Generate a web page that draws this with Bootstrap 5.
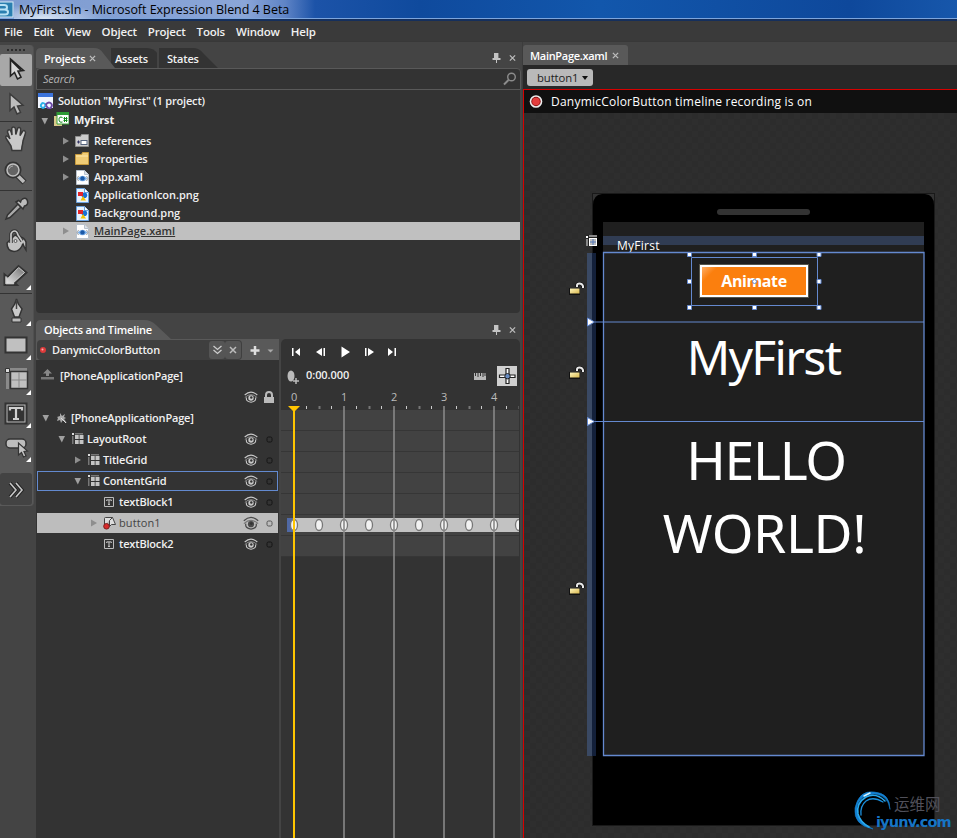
<!DOCTYPE html>
<html lang="en">
<head>
<meta charset="utf-8">
<title>MyFirst.sln - Microsoft Expression Blend 4 Beta</title>
<link href="https://cdn.jsdelivr.net/npm/bootstrap@5.3.0/dist/css/bootstrap.min.css" rel="stylesheet">
<style>
body{width:957px;height:838px;overflow:hidden;background:#444;color:#f0f0f0;font:600 11px/18px "Open Sans","Noto Sans",sans-serif;letter-spacing:-.18px}
svg{display:block;flex:none}
.app-title{height:21px;background:linear-gradient(90deg,#7d9bd0 0,#8ba6d8 245px,#5f84c6 285px,#1c53a8 315px,#0f4a9d 420px,#1257ac 600px,#0e489b 850px,#1757ab);border-bottom:2px solid #152f5c;box-shadow:inset 0 -1px #7da5dc;color:#000;font-weight:400;font-size:12.5px;letter-spacing:-.04px;white-space:nowrap}
.app-title .caption{background:radial-gradient(ellipse 60px 14px at 30px 18px,#d8e4f3,transparent);line-height:20px;padding-left:5px;width:300px}
.menu-strip{height:21px;background:#3a3a3a;padding-left:4px;gap:11px;line-height:22px;font-size:11.5px;letter-spacing:-.19px;border-bottom:1px solid #383838}
.tool-strip{width:34px;height:461px;margin-top:3px;background:#595959;border-radius:0 4px 4px 0;border-right:1px solid #505050}
.tool-strip .sep{height:1px;width:32px;background:#333}
.grip{height:9px;padding:4px 0 0 7px}
.tool{width:32px;height:34px}
.tool.sel{height:32px;background:#a8a8a8;border-radius:2px;margin-bottom:1px}
.tool.more{height:32px;background:#434343;border-radius:3px;margin-top:9px}
.dock{width:486px;margin-left:2px;padding-top:5px}
.tabs{height:21px;padding-right:6px}
.ptab{height:20px;background:#333;padding-top:1px;line-height:20px;flex:none}
.ptab.on{background:#595959;color:#fff}
.p1{width:79px;margin-right:-4px;padding-left:8px;position:relative;z-index:1;clip-path:path("M0 20V5Q0 0 5 0H58Q64 0 67 5L79 20Z")}
.p2{width:46px;padding-left:4px;clip-path:path("M0 0H36Q43 0 47 6V20H0Z")}
.p3{width:60px;margin-left:2px;padding-left:8px;clip-path:path("M0 0H34Q40 0 44 5L59 20H0Z")}
.p4{width:137px;padding-left:8px;padding-top:0;clip-path:path("M0 20V5Q0 0 5 0H108Q115 0 120 5L136 20Z")}
.searchbox{height:22px;width:485px;border:1px solid #595959;border-radius:4px 4px 0 0;background:#333;color:#b5b5b5;font-weight:400;font-style:italic;line-height:18px;padding:0 3px 1px 6px;letter-spacing:-.2px}
.tree{width:484px;height:223px;background:#333;border-radius:0 0 4px 4px;padding-top:1px}
.tree .rowx{height:18px;padding-left:24px}
.tree .rowx.png{letter-spacing:-.04px}
.tree .rowx.hi{background:#c0c0c0;color:#333;text-decoration:underline;letter-spacing:0}
.tri{width:12px;height:12px}
.lower{margin-top:7px;height:518px}
.objects{width:243px;background:#333}
.tl-name{height:21px;background:#595959}
.tl-name .inner{width:205px;height:20px;margin:1px 0 0 1px;background:#3f3f3f;border-radius:4px;padding-left:2px}
.minib{width:16px;height:18px;background:#555;border-radius:3px}
.orow{height:20px;margin:0 1px 1px 1px}
.orow.cur{border:1px solid #638ad0}
.orow.hi{background:#bdbdbd;color:#444;font-weight:400;letter-spacing:.1px}
.orow .eye{margin-left:auto}
.timeline{width:239px;margin-left:2px;background:#333;border-radius:5px 5px 0 0}
.workspace{width:435px;border-left:1px solid #3c3c3c}
.doctab{margin-top:3px;width:105px;height:20px;background:#595959;border-radius:3px 3px 0 0;padding-left:7px;color:#fff;line-height:21px;letter-spacing:-.3px}
.crumbs{height:24px;background:#282828;padding:4px 0 0 4px}
.crumb{width:66px;height:17px;background:#b9b9b9;color:#222;border-radius:3px;padding-left:10px;font-weight:400;font-size:11.3px;line-height:17px;letter-spacing:-.1px}
.design{border-top:1px solid #d80000;border-left:1px solid #d80000;height:749px}
.recbar{height:23px;background:#101010;color:#fff;font-weight:400;font-size:12px;padding-left:5px;letter-spacing:.22px}
.board{height:725px;background:repeating-conic-gradient(#2e2e2e 0 25%,#2c2c2c 0 50%) 0 0/12px 12px;padding:80px 0 0 68px}
.phone{width:343px;height:633px;background:#000;border:1px solid #191919;padding:28px 10px 0 10px}
.screen{width:321px;height:534px;background:#1f1f1f;color:#fff;font-weight:400;text-align:center}
.screen .app-name{margin-top:14px;height:16px;background:linear-gradient(#303c53 9px,transparent 9px);text-align:left;padding-left:14px;font-size:12px;line-height:19px;letter-spacing:.25px}
.orange{width:108px;height:32px;margin:13px 0 0 97px;background:linear-gradient(135deg,#ffae66 0,#fb7f0e 12%);border:2px solid #fff;outline:1px solid #54544c;color:#fff;font:700 16px/28px "Open Sans",sans-serif;letter-spacing:-.4px}
.big{font-family:"Noto Sans","Open Sans",sans-serif;line-height:73px}
.big-name{font-size:48px;letter-spacing:-1.7px;margin-top:23px}
.big-hello{font-size:53.5px;letter-spacing:-.4px;margin-top:30px;padding-left:2px}
.big-hello span{letter-spacing:-1.3px;padding-left:3px}
.adorn{left:0;top:0;pointer-events:none}
.wm{left:330px;top:677px;width:103px;height:48px}
.wm-cn{font:400 15.5px/20px "Noto Sans CJK SC",sans-serif;color:#50505a;letter-spacing:0}
.wm-en{font:700 14.5px/16px "DejaVu Sans","Open Sans",sans-serif;color:#1674c4;letter-spacing:-.85px}
</style>
<script src="https://cdn.jsdelivr.net/npm/bootstrap@5.3.0/dist/js/bootstrap.bundle.min.js"></script>
</head>
<body>
<svg width="0" height="0" class="position-absolute" aria-hidden="true"><defs>
<linearGradient id="gt" x1="0" y1="1" x2="1" y2="0"><stop offset="0" stop-color="#eee"/><stop offset="1" stop-color="#666"/></linearGradient>
<linearGradient id="gy" x1="0" y1="0" x2="1" y2="1"><stop offset="0" stop-color="#fff6bd"/><stop offset="1" stop-color="#d9b84e"/></linearGradient>
<symbol id="x" viewBox="0 0 8 8"><path d="M1 1l6 6M7 1l-6 6" stroke="#bcbcbc" stroke-width="1.5"/></symbol>
<symbol id="pin" viewBox="0 0 9 10"><path d="M2 0h5v5h1.500v2H5v3H4V7H.5V5H2z" fill="#c4c4c4"/><path d="M6 0h1v5H6z" fill="#777"/></symbol>
<symbol id="rt" viewBox="0 0 12 12"><path d="M3 2.500l6 3.500-6 3.500z" fill="#8e8e8e"/></symbol>
<symbol id="dn" viewBox="0 0 12 12"><path d="M2.500 3h6.500L5.800 9.500z" fill="#a0a0a0"/></symbol>
<symbol id="corner" viewBox="0 0 5 5"><path d="M5 0v5H0z" fill="#fff"/></symbol>
<symbol id="xaml" viewBox="0 0 13 15"><path d="M.5.5h8l4 4v10H.5z" fill="#fff" stroke="#b9c2cd"/><path d="M8.500.5v4h4" fill="#dce2ea" stroke="#b9c2cd"/><path d="M1.500 8.500Q6.500 3 11.500 8.500Q6.500 14 1.500 8.500" fill="#7fb2ea"/><circle cx="6.500" cy="8.400" r="2.200" fill="#1c5aa8"/><path d="M2.500 6L1.200 8.500 2.500 11M10.500 6l1.300 2.500L10.500 11" stroke="#777" stroke-width=".7" fill="none"/></symbol>
<symbol id="png" viewBox="0 0 13 15"><path d="M.5.5h8l4 4v10H.5z" fill="#e9f4ff" stroke="#6ba2df"/><path d="M8.500.5v4h4" fill="#fff" stroke="#6ba2df"/><circle cx="8.400" cy="7.300" r="2.800" fill="#1872d4"/><path d="M2 4h5v4H2z" fill="#e3262a"/><path d="M7 8l3 4.500H4.500z" fill="#f5c400"/></symbol>
<symbol id="eye" viewBox="0 0 14 12"><path d="M.7 4Q7-1.800 13.300 4" fill="none" stroke="currentColor" stroke-width="1.100"/><path d="M2.500 6.500Q1.500 10.500 7 11.300Q12.500 10.500 11.500 6.500" fill="none" stroke="currentColor" stroke-width="1.100"/><path d="M.8 6.500Q7 .8 13.200 6.500" fill="none" stroke="currentColor" stroke-width="1" opacity=".6"/><circle cx="7" cy="7" r="2.700" fill="currentColor"/><circle cx="7.300" cy="6.500" r="1.200" fill="#333"/></symbol>
<symbol id="dot" viewBox="0 0 7 7"><rect x="1" y="1" width="5" height="5" rx="1.500" fill="none" stroke="currentColor" stroke-width="1"/></symbol>
<symbol id="grid" viewBox="0 0 12 12"><path d="M0 0h2v2H0z" fill="#ddd"/><path d="M3 0h8v1.500H3zM0 3h1.500v8H0z" fill="#777"/><path d="M3 2h3.700v4H3zM7.500 2H11.500v4H7.500zM3 7h3.700v4H3zM7.500 7H11.500v4H7.500z" fill="#c4c4c4"/></symbol>
<symbol id="tb" viewBox="0 0 11 11"><path d="M.5.5h9v9h-9z" fill="#333" stroke="#bbb"/><path d="M2.700 4V2.900h4.600V4M5 3v4.500M4 7.400h2" stroke="#ccc" fill="none"/></symbol>
<symbol id="lock" viewBox="0 0 16 13"><path d="M8 5V3.500Q8 1.500 10.500 1.500T14 4v2" fill="none" stroke="#111" stroke-width="3.500"/><path d="M8 5V3.500Q8 1.500 10.500 1.500T14 4v2" fill="none" stroke="#e8e8e8" stroke-width="2"/><path d="M0 6h11v7H0z" fill="#111"/><path d="M1 6.500h9.500v5H1z" fill="url(#gy)"/></symbol>
</defs></svg>

<header class="app-title d-flex">
 <svg width="14" height="19"><rect x="-4" y="2" width="17" height="15" fill="#2a7fb0" stroke="#d7edf8"/><path d="M-1 5H4q3 0 3 2.200T4.500 9.500Q8 9.500 8 12T5 14.500H-1M-1 9.500h5.500" stroke="#b8e2f5" stroke-width="2" fill="none"/></svg>
 <div class="caption">MyFirst.sln - Microsoft Expression Blend 4 Beta</div>
</header>
<nav class="menu-strip d-flex"><span>File</span><span>Edit</span><span>View</span><span>Object</span><span>Project</span><span>Tools</span><span>Window</span><span>Help</span></nav>

<div class="d-flex">
<aside class="tool-strip d-flex flex-column">
 <div class="grip"><svg width="18" height="2"><path d="M0 1h18" stroke="#2c2c2c" stroke-width="2" stroke-dasharray="2 2"/></svg></div>
 <div class="tool sel"><svg width="32" height="32"><path d="M10.500 5v17l4-3.500 3 6.500 3.500-1.800-3-6 5.500-.7z" fill="#d6d6d6" stroke="#222" stroke-width="1.600"/><path d="M11 6l10 10" stroke="#222" stroke-width="2"/></svg></div>
 <div class="tool"><svg width="32" height="34"><path d="M10 7v16.500l4-3.500 3 7 3.500-1.700-3-6.300 5.500-.7z" fill="#bdbdbd" stroke="#3b3b3b" stroke-width="1.500"/></svg></div>
 <div class="sep"></div>
 <div class="tool"><svg width="32" height="34"><path d="M11 24L6.500 17q-1.500-2.500 0-3T10 17L7.500 10q0-2.300 1.700-2.300T12 13l-.3-6.500Q12 5 13.500 5T15.500 7l.3 5.500L17.500 7q.6-2 2-1.500t1.200 2.500L20 13.500l2.500-4q1-1.500 2.300-.5t.4 3L23 19q-.3 3-1 5.500l-.5 4h-9.500z" fill="#c8c8c8" stroke="#383838" stroke-width="1.500"/></svg></div>
 <div class="tool"><svg width="32" height="34"><path d="M17 19l7.500 7.500" stroke="#333" stroke-width="6"/><path d="M17.500 19.500l6.500 6.500" stroke="#bcbcbc" stroke-width="3.500"/><circle cx="13" cy="14" r="7" fill="#666" stroke="#333" stroke-width="3"/><circle cx="13" cy="14" r="6" fill="#646464" stroke="#c0c0c0" stroke-width="1.500"/><path d="M9 13q1-3 4-3" stroke="#aaa" fill="none"/></svg></div>
 <div class="sep"></div>
 <div class="tool"><svg width="32" height="34"><path d="M6 28l1.500-4 10.500-11 3 3-11 10.500z" fill="#aaa" stroke="#333" stroke-width="1.500"/><path d="M16 11l7 7 1.500-3q4-1 3-5t-5-2q-1.500 1-2 3l-2-1.500z" fill="#bcbcbc" stroke="#333" stroke-width="1.500"/></svg></div>
 <div class="tool"><svg width="32" height="34"><path d="M15 10L7 18q0 8 7 8.500 5 0 8-5.500 0-1 1-2 1 3 3 6V17q-2-5-7-5z" fill="#c2c2c2" stroke="#333" stroke-width="1.500"/><path d="M11 18v-9q1-3 3.500-3T18 10l4 6" fill="none" stroke="#333" stroke-width="3.500"/><path d="M11 18v-9q1-3 3.500-3T18 10l4 6" fill="none" stroke="#c6c6c6" stroke-width="1.700"/><circle cx="15.500" cy="16" r="1.500" fill="#ddd" stroke="#555"/></svg></div>
 <div class="tool"><svg width="32" height="34"><path d="M4.500 26V15.500l3 2.500L18.500 7l8 6.500L15 24l2 2z" fill="url(#gt)" stroke="#333" stroke-width="2"/><path d="M6 24.800V17.500l2 2L18.700 8.500l5.800 5L13 24l.8.800z" fill="none" stroke="#c8c8c8"/><use href="#corner" x="26" y="26" width="5" height="5"/></svg></div>
 <div class="sep"></div>
 <div class="tool"><svg width="32" height="34"><path d="M16.500 5q-1 5-5 10l3 8h4.500l3-8q-4.500-5-5.500-10z" fill="#c9c9c9" stroke="#333" stroke-width="1.500"/><path d="M16.500 6v9" stroke="#444" stroke-width="1.500"/><path d="M12 24h9v4h-9z" fill="#bbb" stroke="#333"/><use href="#corner" x="26" y="27" width="5" height="5"/></svg></div>
 <div class="tool"><svg width="32" height="34"><path d="M5.500 9.500h21v15h-21z" fill="#c0c0c0" stroke="#333" stroke-width="2"/><use href="#corner" x="26" y="27" width="5" height="5"/></svg></div>
 <div class="tool"><svg width="32" height="34"><path d="M10 6h17v3H10zM6 10h3v17H6z" fill="#8a8a8a"/><path d="M5.500 6.500h4v4h-4z" fill="#ddd" stroke="#333"/><path d="M10.500 9.500h17v17h-17z" fill="#c0c0c0" stroke="#333" stroke-width="1.500"/><path d="M19 10v16M11 18h16" stroke="#888"/><use href="#corner" x="26" y="28" width="5" height="5"/></svg></div>
 <div class="tool"><svg width="32" height="34"><path d="M5.500 7.500h21v20h-21z" fill="#bbb" stroke="#333" stroke-width="2"/><path d="M7.500 9.500h17v16h-17z" fill="#333"/><path d="M10 14.500V12h12v2.500M16 12v11M13 23h6" stroke="#d0d0d0" stroke-width="2.200" fill="none"/><use href="#corner" x="26" y="27" width="5" height="5"/></svg></div>
 <div class="tool"><svg width="32" height="34"><rect x="6" y="9" width="20" height="9" rx="4" fill="#bdbdbd" stroke="#333" stroke-width="1.500"/><path d="M18.500 13v12l3-2.500 2 4.500 2.500-1-2-4.500 3.500-.5z" fill="#c4c4c4" stroke="#333" stroke-width="1.200"/><use href="#corner" x="26" y="27" width="5" height="5"/></svg></div>
 <div class="tool more"><svg width="32" height="32"><path d="M10 10l6 7-6 7M16 10l6 7-6 7" stroke="#222" stroke-width="3.500" fill="none"/><path d="M10 10l6 7-6 7M16 10l6 7-6 7" stroke="#c6c6c6" stroke-width="1.600" fill="none"/></svg></div>
</aside>

<main class="dock">
 <section>
  <div class="tabs d-flex align-items-end">
   <div class="ptab on p1 d-flex align-items-center"><span>Projects</span><svg width="8" height="8" style="margin-left:4px"><use href="#x" width="7" height="7"/></svg></div>
   <div class="ptab p2">Assets</div><div class="ptab p3">States</div>
   <div class="ms-auto d-flex gap-2 align-items-center align-self-center"><svg width="9" height="10"><use href="#pin" width="9" height="10"/></svg><svg width="7" height="8"><use href="#x" width="7" height="8"/></svg></div>
  </div>
  <div class="searchbox d-flex justify-content-between align-items-center"><span>Search</span><svg width="14" height="14"><circle cx="8.500" cy="5" r="3.800" fill="none" stroke="#8c8c8c" stroke-width="1.400"/><path d="M5.500 8L1 12.500" stroke="#8c8c8c" stroke-width="2"/></svg></div>
  <div class="tree">
   <div class="d-flex align-items-center" style="height:20px;padding-left:2px"><svg width="16" height="16" style="margin-right:4px"><path d="M0 0h15v15H0z" fill="#f2f6ff"/><path d="M0 0h15v4H0z" fill="#3c74dc"/><path d="M7.500 11.500Q5 9 3.500 11T4 14.500t3.500-2.500" fill="none" stroke="#2ab0e8" stroke-width="2"/><path d="M7.500 12Q10 8.500 12.500 10T13 14.500t-5-2" fill="none" stroke="#6b4aa5" stroke-width="2"/></svg><span>Solution "MyFirst" (1 project)</span></div>
   <div class="d-flex align-items-center fw-bold pb-1" style="height:21px;padding-left:3px"><svg class="tri"><use href="#dn" y="1"/></svg><svg width="15" height="15" style="margin-left:3px"><path d="M0 4h8v10H0z" fill="#d9c98b"/><path d="M3 0h12v12H3z" fill="#fff" stroke="#3aa43a"/><path d="M3 0h12v3H3z" fill="#2f9a36"/><path d="M8.500 5.500Q5 4 5 7.500T8.500 10M10.500 5v5M12.500 5v5M9.500 6.500h4M9.500 8.500h4" stroke="#138a1c" fill="none"/></svg><span style="margin-left:5px">MyFirst</span></div>
   <div class="rowx d-flex align-items-center"><svg class="tri me-1"><use href="#rt"/></svg><svg width="15" height="14" style="margin:0 4px 0 -1px"><path d="M.5 2.500h5l1-2h7v12H.5z" fill="#ccc" stroke="#8e8e8e"/><path d="M2 8h3M3.500 6.500v3" stroke="#336"/><rect x="6" y="6.500" width="6" height="4" fill="#fff" stroke="#55637d"/></svg>References</div>
   <div class="rowx d-flex align-items-center"><svg class="tri me-1"><use href="#rt"/></svg><svg width="15" height="14" style="margin:0 4px 0 -1px"><path d="M.5 2.500h6l1-2h6v12H.5z" fill="#f0cc76" stroke="#c79a3d"/><path d="M1 4h12" stroke="#ffe9ae"/></svg>Properties</div>
   <div class="rowx d-flex align-items-center"><svg class="tri me-1"><use href="#rt"/></svg><svg width="13" height="15" style="margin:0 5px 0 0"><use href="#xaml"/></svg>App.xaml</div>
   <div class="rowx png d-flex align-items-center"><span class="tri me-1"></span><svg width="13" height="15" style="margin:0 5px 0 0"><use href="#png"/></svg>ApplicationIcon.png</div>
   <div class="rowx png d-flex align-items-center"><span class="tri me-1"></span><svg width="13" height="15" style="margin:0 5px 0 0"><use href="#png"/></svg>Background.png</div>
   <div class="rowx hi d-flex align-items-center"><svg class="tri me-1"><use href="#rt"/></svg><svg width="13" height="15" style="margin:0 5px 0 0"><use href="#xaml"/></svg>MainPage.xaml</div>
  </div>
 </section>

 <section class="lower">
  <div class="d-flex justify-content-between" style="height:19px;padding-right:6px"><div class="ptab on p4">Objects and Timeline</div><div class="d-flex gap-2 align-items-center"><svg width="9" height="10"><use href="#pin" width="9" height="10"/></svg><svg width="7" height="8"><use href="#x" width="7" height="8"/></svg></div></div>
  <div class="d-flex h-100">
   <div class="objects">
    <div class="tl-name d-flex">
     <div class="inner d-flex align-items-center"><svg width="8" height="8"><circle cx="4" cy="4" r="3" fill="#dd3b3b"/><circle cx="3.500" cy="3.500" r="1" fill="#ffb0b0"/></svg><span style="margin-left:5px">DanymicColorButton</span>
      <div class="minib ms-auto d-flex align-items-center justify-content-center"><svg width="9" height="10"><path d="M.5 1l4 3.500 4-3.500M.5 5l4 3.500L8.500 5" fill="none" stroke="#ccc" stroke-width="1.300"/></svg></div><div class="minib d-flex align-items-center justify-content-center" style="margin:0 1px 0 0"><svg width="8" height="8"><use href="#x"/></svg></div></div>
     <svg width="36" height="20"><path d="M13 7v9M8.500 11.500h9" stroke="#ddd" stroke-width="2.500"/><path d="M25.500 10.500h6l-3 3z" fill="#aaa"/></svg>
    </div>
    <div class="d-flex align-items-center" style="height:32px;padding-left:5px"><svg width="14" height="14"><path d="M0 8h13v2.500H0z" fill="#777"/><path d="M6.500 0L11 4.500H8V7H5V4.500H2z" fill="#888"/></svg><span style="margin-left:5px">[PhoneApplicationPage]</span></div>
    <div class="d-flex align-items-center justify-content-end" style="height:16px;padding:0 4px 6px 0;color:#c8c8c8"><svg width="14" height="12" style="margin-right:5px"><use href="#eye"/></svg><svg width="12" height="13"><path d="M3 6V4q0-3 3-3t3 3v2" fill="none" stroke="#bbb" stroke-width="2"/><path d="M1 6h10v6H1z" fill="#bbb"/></svg></div>
    <div class="orow d-flex align-items-center" style="padding-left:3px"><svg class="tri"><use href="#dn"/></svg><svg width="12" height="12" style="margin:0 3px 0 4px"><path d="M1 5l3-1 0-3 2 3 3-2-1 3 2 1-2 1 3 4-4-3-2 3-1-3-3 1 1-3z" fill="#aaa"/><path d="M5 6l5 5" stroke="#ddd"/></svg>[PhoneApplicationPage]</div>
    <div class="orow d-flex align-items-center" style="padding-left:19px"><svg class="tri"><use href="#dn"/></svg><svg width="12" height="12" style="margin:0 3px 0 4px"><use href="#grid"/></svg>LayoutRoot<svg class="eye" width="14" height="12" color="#c8c8c8"><use href="#eye"/></svg><svg width="7" height="7" color="#151515" style="margin:0 5px 0 8px"><use href="#dot"/></svg></div>
    <div class="orow d-flex align-items-center" style="padding-left:35px"><svg class="tri"><use href="#rt"/></svg><svg width="12" height="12" style="margin:0 3px 0 4px"><use href="#grid"/></svg>TitleGrid<svg class="eye" width="14" height="12" color="#c8c8c8"><use href="#eye"/></svg><svg width="7" height="7" color="#151515" style="margin:0 5px 0 8px"><use href="#dot"/></svg></div>
    <div class="orow cur d-flex align-items-center" style="padding-left:34px"><svg class="tri"><use href="#dn"/></svg><svg width="12" height="12" style="margin:0 3px 0 4px"><use href="#grid"/></svg>ContentGrid<svg class="eye" width="14" height="12" color="#c8c8c8"><use href="#eye"/></svg><svg width="7" height="7" color="#151515" style="margin:0 4px 0 8px"><use href="#dot"/></svg></div>
    <div class="orow d-flex align-items-center" style="padding-left:67px"><svg width="11" height="11" style="margin-right:4px"><use href="#tb"/></svg>textBlock1<svg class="eye" width="14" height="12" color="#c8c8c8"><use href="#eye"/></svg><svg width="7" height="7" color="#151515" style="margin:0 5px 0 8px"><use href="#dot"/></svg></div>
    <div class="orow hi d-flex align-items-center" style="padding-left:51px"><svg class="tri"><use href="#rt"/></svg><svg width="14" height="14" style="margin:0 3px 0 2px"><path d="M2.500 9V2.500q0-1 1-1h7l-3 3v6l2-2h4l-3-7" fill="#ddd" stroke="#444"/><circle cx="4.500" cy="10.300" r="2.800" fill="#d82b2b" stroke="#7c2020"/></svg>button1<svg class="eye" width="16" height="14" color="#4a4a4a"><use href="#eye"/></svg><svg width="7" height="7" color="#555" style="margin:0 5px 0 7px"><use href="#dot"/></svg></div>
    <div class="orow d-flex align-items-center" style="padding-left:67px"><svg width="11" height="11" style="margin-right:4px"><use href="#tb"/></svg>textBlock2<svg class="eye" width="14" height="12" color="#c8c8c8"><use href="#eye"/></svg><svg width="7" height="7" color="#151515" style="margin:0 5px 0 8px"><use href="#dot"/></svg></div>
   </div>
   <div class="timeline">
    <svg width="239" height="25"><g fill="#fff"><path d="M11 9h1.500v8H11zM19 9v8l-5-4zM35 13l6-4v8zM42.500 9H44v8h-1.500zM60.500 7.500l8.500 5.500-8.500 5.500zM84 9h1.500v8H84zM87 9l6 4-6 4zM107 9l5 4-5 4zM113.500 9h1.500v8h-1.500z"/></g></svg>
    <div class="d-flex align-items-center" style="height:24px;padding-left:6px"><svg width="13" height="15"><ellipse cx="4" cy="7" rx="3.500" ry="5.500" fill="#bbb"/><path d="M9 9v6M6 12h6" stroke="#bbb" stroke-width="1.500"/></svg><span style="margin:-2px 0 0 6px;letter-spacing:-.08px">0:00.000</span>
     <svg class="ms-auto" width="12" height="7" style="margin-right:11px"><path d="M0 0h12v7H0z" fill="#b8b8b8"/><path d="M1.500 0v3M4 0v4M6.500 0v3M9 0v4M11 0v3" stroke="#333"/></svg>
     <svg width="20" height="20" style="margin-right:3px"><path d="M0 0h20v20H0z" fill="#d0d0d0"/><path d="M2.500 9h6.500V2.500h3V9h6v2.500h-6v6H9v-6H2.500z" fill="#fff" stroke="#222" stroke-width="1.200"/><circle cx="10.500" cy="10.200" r="2.700" fill="#668ac0" stroke="#222"/></svg></div>
    <svg id="tracks" width="239" height="450" font-family="Open Sans" font-size="11" font-weight="400"></svg>
   </div>
  </div>
 </section>
</main>

<section class="workspace">
 <div class="doctab d-flex align-items-center"><span>MainPage.xaml</span><svg width="7" height="7" style="margin-left:5px"><use href="#x"/></svg></div>
 <div class="crumbs"><div class="crumb d-flex align-items-center">button1<svg width="6" height="4" style="margin-left:4px"><path d="M0 0h6L3 4z" fill="#111"/></svg></div></div>
 <div class="design">
  <div class="recbar d-flex align-items-center"><svg width="14" height="14" style="margin-right:8px"><circle cx="7" cy="6.500" r="6.300" fill="#eee"/><circle cx="7" cy="6.500" r="4.700" fill="#8c1414"/><circle cx="7" cy="6.500" r="3.800" fill="#e33e3e"/></svg>DanymicColorButton timeline recording is on</div>
  <div class="board position-relative">
   <div class="phone">
    <div class="screen d-flex flex-column"><div class="app-name">MyFirst</div>
     <div class="orange">Animate</div>
     <div class="big big-name">MyFirst</div>
     <div class="big big-hello"><span>HELLO</span><br>WORLD!</div></div>
   </div>
   <svg class="adorn position-absolute" width="433" height="725">
    <path d="M69 81h9q-9 1-9 11z" fill="#333"/><path d="M410 81h-9q9 1 9 11z" fill="#333"/>
    <rect x="193" y="96" width="93" height="6" rx="3" fill="#333"/>
    <path d="M63 140h5v503h-5z" fill="#3a4963"/><path d="M68 140h4v503h-4z" fill="#13203a"/>
    <g fill="none" stroke="#6489cf"><path d="M79.500 139.500h320.500v503H79.500z" stroke-width="1.300"/><path d="M71 209h329M71 308.500h329"/><path d="M167.500 144.500h126v48h-126z"/></g>
    <g fill="#fff" stroke="#6489cf"><path d="M63.500 205v8l7-4zM63.500 304.500v8l7-4z"/><path d="M163.500 139.500h4v4h-4zM228.500 139.500h4v4h-4zM293 139.500h4v4h-4zM163.500 166.500h4v4h-4zM293 166.500h4v4h-4zM163.500 192.500h4v4h-4zM228.500 192.500h4v4h-4zM293 192.500h4v4h-4z"/><circle cx="230.500" cy="168.500" r="2"/></g>
    <use href="#lock" x="45" y="169" width="16" height="13"/><use href="#lock" x="45" y="253" width="16" height="13"/><use href="#lock" x="45" y="469" width="16" height="13"/>
    <path d="M62 122h11v11H62z" fill="#222"/><path d="M62 123h2v2h-2z" fill="#fff"/><path d="M65 122h8v2h-8zM62 126h2v7h-2z" fill="#888"/><path d="M65 125h8v8h-8z" fill="#fff"/><path d="M66 126h6v6h-6z" fill="#bbb"/><path d="M69 126v6M66 129h6" stroke="#5578b8"/>
   </svg>
   <div class="wm position-absolute">
    <div class="d-flex"><svg width="40" height="30" overflow="visible"><g fill="none" stroke-linecap="round"><path d="M36 19Q34 5 20 4Q6 5 3 17Q2 31 19 39Q-1 35 1 18Q5 0 20 2Q36 3 36 19z" fill="#137fd0" stroke="#137fd0" stroke-width=".6"/><path d="M31 11Q22 2 12 7Q2 13 4 24Q6 32 15 37" stroke="#29a9ed" stroke-width="1.600"/><path d="M29 12Q19 6 12 11Q6 16 7 25" stroke="#1b8fdc" stroke-width="1.300"/><path d="M10 6l6-3" stroke="#d9f4ff" stroke-width="1.500"/></g></svg><span class="wm-cn" style="margin-top:3px">运维网</span></div>
    <div class="wm-en" style="margin:-6px 0 0 22px">iyunv.com</div>
   </div>
  </div>
 </div>
</section>
</div>
<script>
// Timeline ruler, tracks, keyframes and playhead; one second is 50 units wide.
const W=238, X0=13;
let s='';
for(let r=0;r<7;r++) s+=`<rect x="0" y="${22+r*21}" width="${W}" height="20" fill="#424242"/><rect x="0" y="${42+r*21}" width="${W}" height="1" fill="#363636"/>`;
s+=`<rect x="6" y="130" width="${W-6}" height="14" fill="#c2c2c2"/><rect x="6" y="130" width="6" height="14" fill="#5069a5"/>`;
for(let i=0;i<10;i++) s+=`<ellipse cx="${X0+i*25}" cy="137" rx="3.500" ry="5.500" fill="#f2f2f2" stroke="#777" stroke-width="1.300"/>`;
for(let i=1;i<19;i++) if(i%4) s+=`<rect x="${X0-.5+i*12.5}" y="18" width="${i%2?1:2}" height="3" fill="${i%2?'#ccc':'#777'}"/>`;
for(let i=0;i<5;i++){ s+=`<text x="${X0+i*50}" y="13" fill="#bbb" text-anchor="middle">${i}</text>`; if(i) s+=`<rect x="${X0-1+i*50}" y="18" width="2" height="432" fill="#888" fill-opacity=".8"/>`;}
s+=`<path d="M7 18h12l-5 5v427h-2V23z" fill="#ffc500"/><rect x="238" width="1" height="450" fill="#333"/>`;
document.getElementById('tracks').innerHTML=s;
</script>
</body>
</html>
